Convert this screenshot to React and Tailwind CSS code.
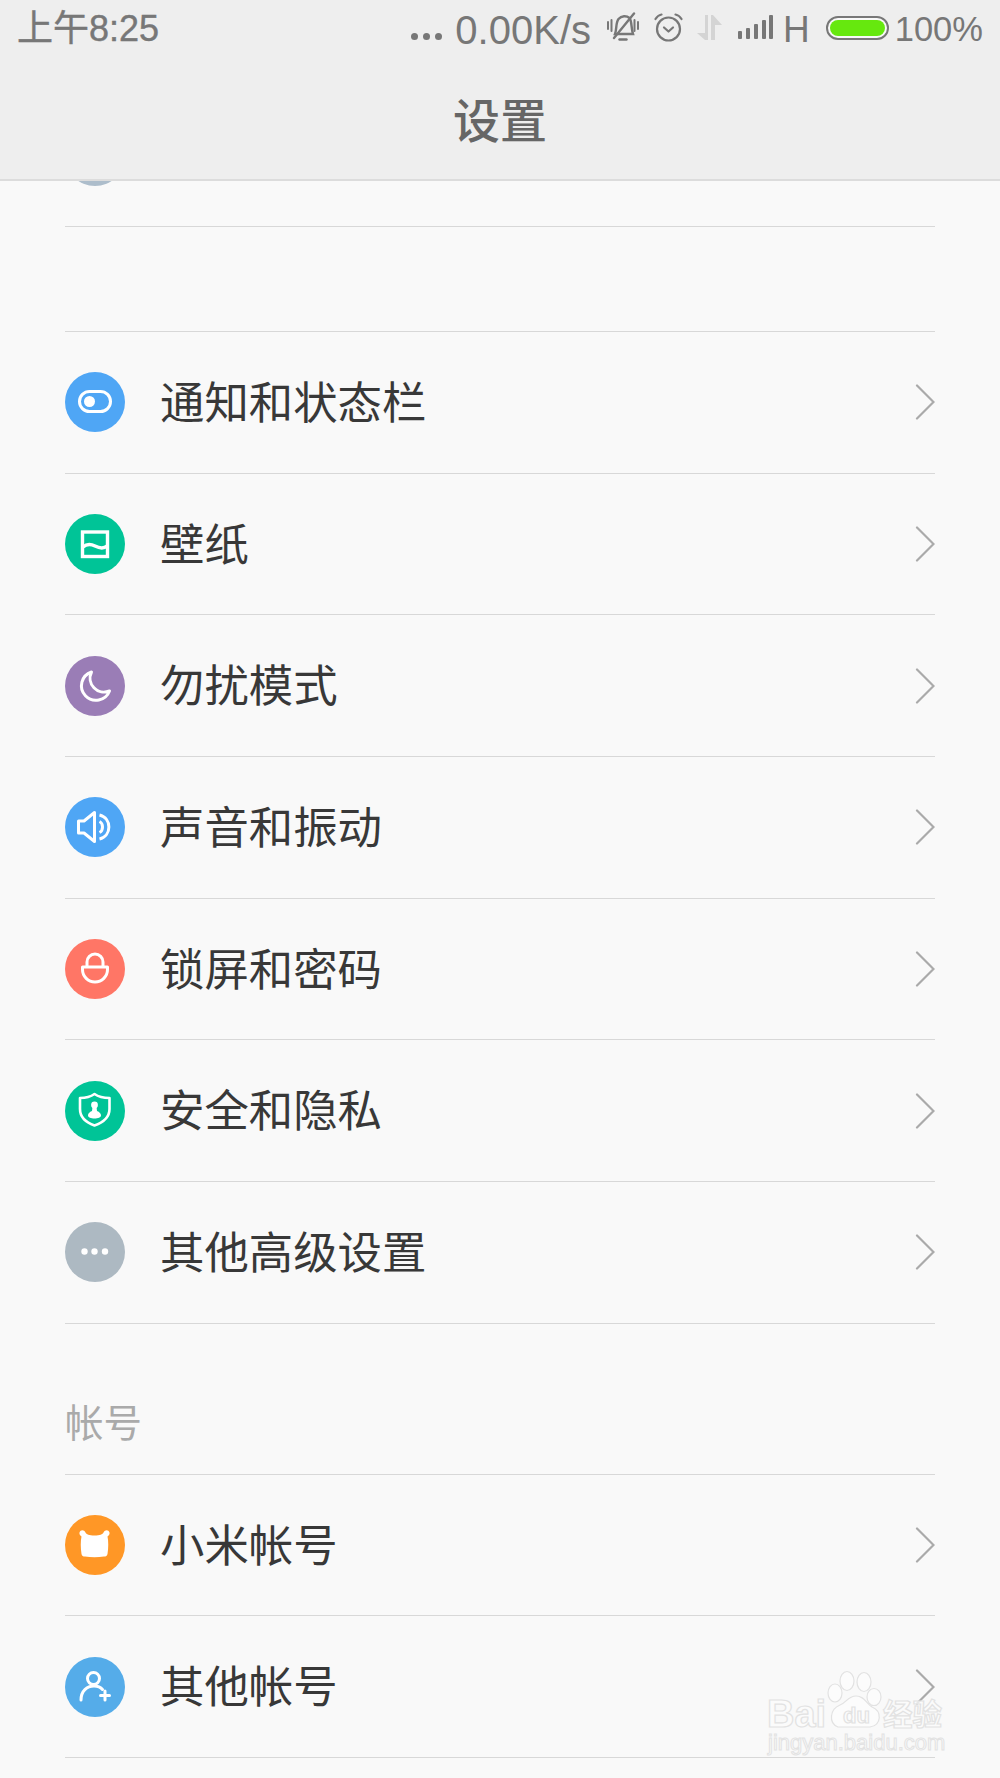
import React from 'react';

const CJK = "font-['Noto_Sans_CJK_SC','Noto_Sans',sans-serif]";

// 60x60 glyphs that sit inside the coloured circles
const stroke = { fill: 'none', stroke: '#fff', strokeWidth: 3, strokeLinecap: 'round', strokeLinejoin: 'round' };

const glyphs = {
  toggle: (
    <>
      <rect x="14.5" y="19.5" width="31" height="20" rx="10" {...stroke} />
      <circle cx="24.5" cy="29.5" r="5.5" fill="#fff" />
    </>
  ),
  wallpaper: (
    <>
      <rect x="17.5" y="18" width="25" height="24.5" {...stroke} strokeWidth="3.4" strokeLinecap="butt" strokeLinejoin="miter" />
      <path d="M18 33 C22 29.5 26 30 30 32 S38 35.5 42 32" {...stroke} strokeWidth="3.4" />
    </>
  ),
  moon: <path d="M26.5 16 A14.5 14.5 0 1 0 44.5 35 A14 14 0 0 1 26.5 16 Z" {...stroke} />,
  sound: (
    <>
      <path d="M13.5 24 H19 L29.5 15.5 V44.5 L19 36 H13.5 Z" {...stroke} />
      <path d="M34.5 24.5 C38.5 26.5 38.5 33.5 34.5 35.5" {...stroke} strokeLinecap="butt" />
      <path d="M34.5 18 C47 21 47 39 34.5 42" {...stroke} strokeLinecap="butt" />
    </>
  ),
  lock: (
    <>
      <path d="M22 27 V23 A8 8 0 0 1 38 23 V27" {...stroke} />
      <path d="M17.5 28 H42.5 V30.5 A12.5 12.5 0 0 1 17.5 30.5 Z" {...stroke} />
    </>
  ),
  shield: (
    <>
      <path d="M15 17 C21 17 26 15.5 29.5 13 C33 15.5 38 17 44.5 17 V28 C44.5 36 38 41.5 29.5 44.5 C21 41.5 15 36 15 28 Z" {...stroke} strokeWidth="2.6" />
      <circle cx="29.5" cy="24" r="3.4" fill="#fff" />
      <path d="M27.5 26 H31.5 L32 30 C34.5 31 36 32.5 36 34.5 C36 36.5 33 37.5 29.5 37.5 C26 37.5 23 36.5 23 34.5 C23 32.5 24.5 31 27 30 Z" fill="#fff" />
    </>
  ),
  more: (
    <>
      <circle cx="19.5" cy="29.5" r="3.2" fill="#fff" />
      <circle cx="29.5" cy="29.5" r="3.2" fill="#fff" />
      <circle cx="40" cy="29.5" r="3.2" fill="#fff" />
    </>
  ),
  mi: (
    <path d="M14.5 17.5 C15.5 14.5 19 14.5 20.5 17.5 C21.5 19.5 24 20.5 29.5 20.5 C35 20.5 37.5 19.5 38.5 17.5 C40 14.5 43.5 14.5 44.5 17.5 C45 19.5 43.5 20.5 42.5 21.5 C43.5 26 43.5 33 42.5 39 C42 41 41 41.5 39 41.5 C33 42.5 26 42.5 20 41.5 C18 41.5 17 41 16.5 39 C15.5 33 15.5 26 16.5 21.5 C15.5 20.5 14 19.5 14.5 17.5 Z" fill="#fff" />
  ),
  account: (
    <>
      <circle cx="28.5" cy="21.5" r="6" {...stroke} />
      <path d="M16 43 C16 34 22 29 29 29 C32.5 29 35.5 30 37.5 32.5" {...stroke} />
      <path d="M40 34 V43 M35.5 38.5 H44.5" {...stroke} />
    </>
  ),
};

const Row = ({ label, color, glyph }) => (
  <div className="h-[141.67px] flex items-center border-b border-[#d8d8d8]">
    <div className={`w-[60px] h-[60px] rounded-full shrink-0 ${color}`}>
      {glyph && <svg viewBox="0 0 60 60" className="w-[60px] h-[60px]">{glyphs[glyph]}</svg>}
    </div>
    <span className={`ml-[35px] -mt-[4px] text-[44.4px] leading-none text-[#383838] ${CJK}`}>{label}</span>
    <svg width="20" height="36" viewBox="0 0 20 36" className="ml-auto">
      <path d="M2 1.5 L18.5 18 L2 34.5" fill="none" stroke="#aaa" strokeWidth="2.2" strokeLinecap="round" />
    </svg>
  </div>
);

const BellOff = () => (
  <svg width="32" height="30" viewBox="0 0 32 30" fill="none" stroke="#777" strokeWidth="2.4" strokeLinecap="round">
    <path d="M8 22 C10 17 8.5 11 11.5 7 C14.5 3.5 19.5 3.5 22.5 6 C25 9 24 16 26 22 Z" />
    <path d="M12.5 27.5 H19.5" />
    <path d="M7 26 L27 1.5" />
    <path d="M1 10 V17 M4.5 8 V19 M27.5 8 V19 M31 10 V17" strokeWidth="2" />
  </svg>
);

const Alarm = () => (
  <svg width="29" height="29" viewBox="0 0 29 29" fill="none" stroke="#777" strokeWidth="2.2" strokeLinecap="round" strokeLinejoin="round">
    <circle cx="14.5" cy="16" r="11.5" />
    <path d="M10 14.5 L14.5 18.5 L19 14.5" />
    <path d="M1.5 6 C3 3.5 5 2 7.5 1.5 M27.5 6 C26 3.5 24 2 21.5 1.5" />
  </svg>
);

const DataArrows = () => (
  <svg width="25" height="25" viewBox="0 0 25 25" fill="#d4d4d4">
    <path d="M0 18 L8 18 L8 0 L11 0 L11 25 L8 25 Z" />
    <path d="M14 0 L16 0 L25 10 L18 10 L18 25 L14 25 Z" />
  </svg>
);

const Signal = () => (
  <svg width="35" height="25" viewBox="0 0 35 25" fill="#777">
    <rect x="0" y="16" width="4" height="8" rx="1" />
    <rect x="8" y="13" width="4" height="11" rx="1" />
    <rect x="16" y="9" width="4" height="15" rx="1" />
    <rect x="24" y="5" width="4" height="19" rx="1" />
    <rect x="31" y="0" width="4" height="24" rx="1" />
  </svg>
);

// faint site watermark in the corner of the shot
const Watermark = () => (
  <svg width="200" height="100" viewBox="0 0 200 100" className="absolute left-[760px] top-[1665px]">
    <g fill="#fcfcfc" fillOpacity="0.75" stroke="#e2e2e2" strokeWidth="1.2">
      <ellipse cx="75" cy="28" rx="7" ry="9" />
      <ellipse cx="87" cy="16" rx="7" ry="9.5" />
      <ellipse cx="104" cy="17" rx="7" ry="9.5" />
      <ellipse cx="114" cy="32" rx="7" ry="8.5" />
      <path d="M78 62 C68 58 70 44 80 40 C86 38 88 31 96 31 C104 31 106 38 112 42 C122 46 122 60 110 62 Z" />
      <text x="7" y="62" fontFamily="'Liberation Sans'" fontWeight="700" fontSize="38">Bai</text>
      <text x="83" y="58" fontFamily="'Liberation Sans'" fontWeight="700" fontSize="22">du</text>
      <text x="123" y="60" fontFamily="'Noto Sans CJK SC'" fontWeight="700" fontSize="29.5">经验</text>
      <text x="8" y="85" fontFamily="'Liberation Sans'" fontSize="22" strokeWidth="1">jingyan.baidu.com</text>
    </g>
  </svg>
);

const App = () => {
  const display = [
    { label: '通知和状态栏', color: 'bg-[#4fa6f5]', glyph: 'toggle' },
    { label: '壁纸', color: 'bg-[#00c497]', glyph: 'wallpaper' },
    { label: '勿扰模式', color: 'bg-[#9a7db6]', glyph: 'moon' },
    { label: '声音和振动', color: 'bg-[#4fa6f5]', glyph: 'sound' },
    { label: '锁屏和密码', color: 'bg-[#ff7666]', glyph: 'lock' },
    { label: '安全和隐私', color: 'bg-[#00c497]', glyph: 'shield' },
    { label: '其他高级设置', color: 'bg-[#adb9c2]', glyph: 'more' },
  ];
  const accounts = [
    { label: '小米帐号', color: 'bg-[#ff9726]', glyph: 'mi' },
    { label: '其他帐号', color: 'bg-[#55ace9]', glyph: 'account' },
  ];

  return (
    <div className="relative w-[1000px] h-[1778px] overflow-hidden bg-[#f9f9f9]">
      <header className="h-[181px] bg-[#eeeeee] border-b-2 border-[#dcdcdc] flex flex-col">
        <div className="h-[56px] flex items-center justify-between pl-[17px] pr-[17px] text-[#777] font-['Liberation_Sans','Noto_Sans_CJK_SC',sans-serif]">
          <span className="mt-[2px] text-[36px] leading-none [-webkit-text-stroke:0.4px_#777]">上午8:25</span>
          <div className="flex items-center">
            <div className="flex gap-[5px] mt-[17px]">
              <span className="w-[7px] h-[7px] rounded-full bg-[#777]" />
              <span className="w-[7px] h-[7px] rounded-full bg-[#777]" />
              <span className="w-[7px] h-[7px] rounded-full bg-[#777]" />
            </div>
            <span className="ml-[13px] mt-[4px] text-[40px] leading-none">0.00K/s</span>
            <div className="ml-[16px] -mt-[2px]"><BellOff /></div>
            <div className="ml-[15px] -mt-[2px]"><Alarm /></div>
            <div className="ml-[14px] -mt-[2px]"><DataArrows /></div>
            <div className="ml-[16px] -mt-[1px]"><Signal /></div>
            <span className="ml-[10px] mt-[2px] text-[37px] leading-none">H</span>
            <div className="ml-[16px] w-[63px] h-[24px] rounded-full border-2 border-[#777] p-[2px] bg-[#f8f8f8]">
              <div className="w-full h-full rounded-full bg-[#66e80e]" />
            </div>
            <span className="ml-[6px] mt-[2px] text-[34.5px] leading-none">100%</span>
          </div>
        </div>
        <div className="flex-1 flex items-center justify-center">
          <h1 className={`text-[47px] leading-none font-medium text-[#666] ${CJK}`}>设置</h1>
        </div>
      </header>

      <main className="px-[65px]">
        <div className="h-[46px] overflow-hidden flex flex-col justify-end">
          <div className="shrink-0">
            <Row label="" color="bg-[#adbdcb]" />
          </div>
        </div>

        <div className="h-[105px] border-b border-[#d8d8d8]" />
        {display.map(r => <Row key={r.label} {...r} />)}

        <div className="h-[151px] flex items-center border-b border-[#d8d8d8] pt-[44px]">
          <span className={`text-[38.5px] leading-none text-[#aaa] ${CJK}`}>帐号</span>
        </div>
        {accounts.map(r => <Row key={r.label} {...r} />)}
      </main>

      <Watermark />
    </div>
  );
};

export default App;
